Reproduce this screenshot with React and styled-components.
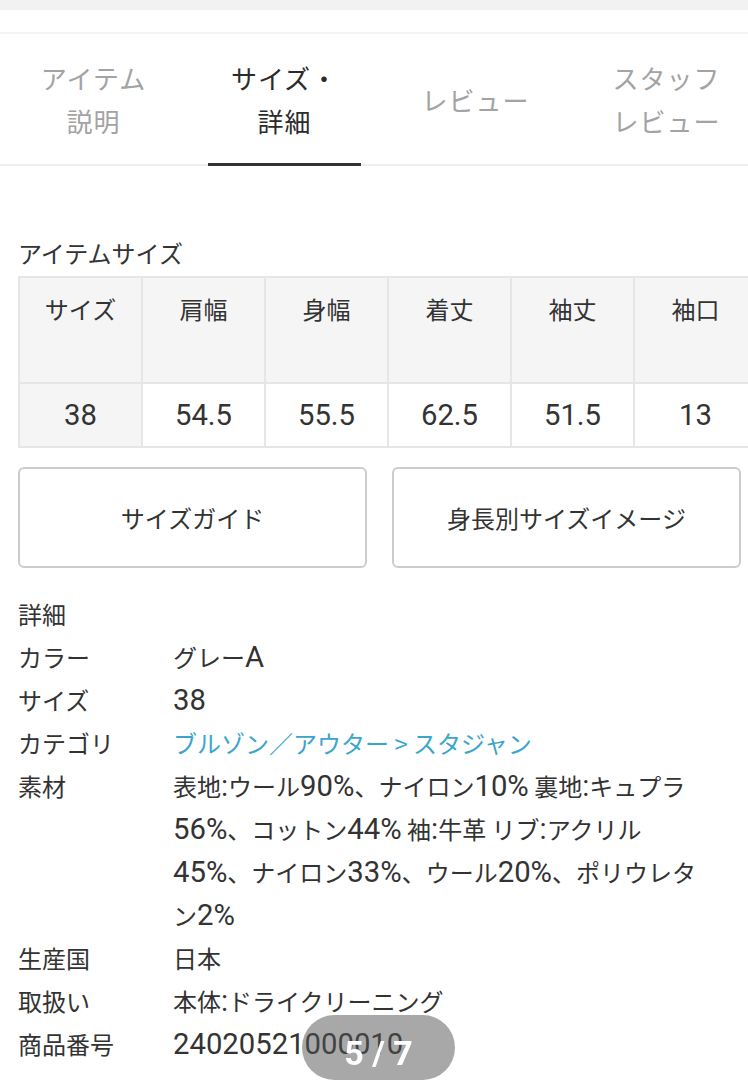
import React from "react";
import styled, { createGlobalStyle } from "styled-components";

const GlobalStyle = createGlobalStyle`
  body {
    margin: 0;
    background: #fff;
    font-family: "Noto Sans CJK JP", sans-serif;
    color: #333;
  }
`;

const Page = styled.div`
  width: 748px;
  overflow: hidden;
`;

const TopStrip = styled.div`
  height: 10px;
  background: #f2f2f2;
`;

const Spacer = styled.div`
  height: 22px;
  border-bottom: 2px solid #f5f5f5;
`;

const TabBar = styled.div`
  display: flex;
  margin-left: -2px;
  border-bottom: 2px solid #eeeeee;
`;

const Tab = styled.div`
  position: relative;
  flex: 0 0 191px;
  height: 130px;
  display: flex;
  align-items: center;
  justify-content: center;
  text-align: center;
  font-size: 26px;
  line-height: 43px;
  letter-spacing: 1px;
  color: ${(p) => (p.$active ? "#2b2b2b" : "#a3a3a3")};

  &::after {
    content: "";
    display: ${(p) => (p.$active ? "block" : "none")};
    position: absolute;
    left: 10%;
    right: 10%;
    bottom: -2px;
    height: 3px;
    background: #333;
  }
`;

const Latin = styled.span`
  font-family: Roboto, sans-serif;
  font-size: 1.22em;
  line-height: 0;
`;

const Section = styled.div`
  padding: 69px 0 0 18px;
`;

const Title = styled.div`
  font-size: 24px;
  line-height: 36px;
  margin-bottom: 5px;
`;

const SizeTable = styled.table`
  border-collapse: collapse;
  table-layout: fixed;
  width: 738px;
`;

const Head = styled.th`
  width: 123px;
  height: 106px;
  vertical-align: top;
  padding-top: 14px;
  box-sizing: border-box;
  font-weight: 400;
  font-size: 24px;
  line-height: 34px;
  background: #f5f5f5;
  border: 2px solid #e6e6e6;
`;

const Cell = styled.td`
  height: 64px;
  padding: 0;
  box-sizing: border-box;
  text-align: center;
  font-size: 24px;
  line-height: 30px;
  background: ${(p) => (p.$first ? "#f5f5f5" : "#fff")};
  border: 2px solid #e6e6e6;
`;

const Buttons = styled.div`
  display: flex;
  gap: 25px;
  margin-top: 19px;
  padding-right: 7px;
`;

const GuideButton = styled.div`
  flex: 0 0 349px;
  height: 101px;
  box-sizing: border-box;
  border: 2px solid #cccccc;
  border-radius: 6px;
  display: flex;
  align-items: center;
  justify-content: center;
  font-size: 24px;
`;

const Details = styled.div`
  margin-top: 24px;
  padding-right: 43px;
  font-size: 24px;
  line-height: 43px;
`;

const Row = styled.div`
  display: flex;
`;

const Label = styled.div`
  flex: 0 0 155px;
`;

const Value = styled.div`
  flex: 1;
  color: ${(p) => (p.$link ? "#3aa6cc" : "#333")};
`;

const Pager = styled.div`
  position: fixed;
  left: 302px;
  top: 1015px;
  width: 153px;
  height: 65px;
  padding-top: 10px;
  box-sizing: border-box;
  border-radius: 34px;
  background: rgba(81, 81, 81, 0.5);
  color: #fff;
  font-family: Roboto, sans-serif;
  font-size: 34px;
  font-weight: 700;
  display: flex;
  align-items: center;
  justify-content: center;
`;

// latin runs (digits, letters, %) render larger than the kana around them
function mix(text) {
  return text.split(/([0-9A-Za-z%.:]+)/).map((part, i) =>
    i % 2 === 1 ? <Latin key={i}>{part}</Latin> : part
  );
}

const tabs = [
  { label: ["アイテム", "説明"] },
  { label: ["サイズ・", "詳細"], active: true },
  { label: ["レビュー"] },
  { label: ["スタッフ", "レビュー"] },
];

const heads = ["サイズ", "肩幅", "身幅", "着丈", "袖丈", "袖口"];
const values = ["38", "54.5", "55.5", "62.5", "51.5", "13"];

const details = [
  ["カラー", "グレーA"],
  ["サイズ", "38"],
  ["カテゴリ", "ブルゾン／アウター > スタジャン", true],
  [
    "素材",
    "表地:ウール90%、ナイロン10% 裏地:キュプラ56%、コットン44% 袖:牛革 リブ:アクリル45%、ナイロン33%、ウール20%、ポリウレタン2%",
  ],
  ["生産国", "日本"],
  ["取扱い", "本体:ドライクリーニング"],
  ["商品番号", "24020521000010"],
];

export default function App() {
  return (
    <Page>
      <GlobalStyle />
      <TopStrip />
      <Spacer />
      <TabBar>
        {tabs.map((t, i) => (
          <Tab key={i} $active={t.active}>
            <div>
              {t.label.map((l) => (
                <div key={l}>{l}</div>
              ))}
            </div>
          </Tab>
        ))}
      </TabBar>
      <Section>
        <Title>アイテムサイズ</Title>
        <SizeTable>
          <thead>
            <tr>
              {heads.map((h) => (
                <Head key={h}>{h}</Head>
              ))}
            </tr>
          </thead>
          <tbody>
            <tr>
              {values.map((v, i) => (
                <Cell key={i} $first={i === 0}>
                  {mix(v)}
                </Cell>
              ))}
            </tr>
          </tbody>
        </SizeTable>
        <Buttons>
          <GuideButton>サイズガイド</GuideButton>
          <GuideButton>身長別サイズイメージ</GuideButton>
        </Buttons>
        <Details>
          <div>詳細</div>
          {details.map(([label, value, link]) => (
            <Row key={label}>
              <Label>{label}</Label>
              <Value $link={link}>{link ? value : mix(value)}</Value>
            </Row>
          ))}
        </Details>
      </Section>
      <Pager>5 / 7</Pager>
    </Page>
  );
}
